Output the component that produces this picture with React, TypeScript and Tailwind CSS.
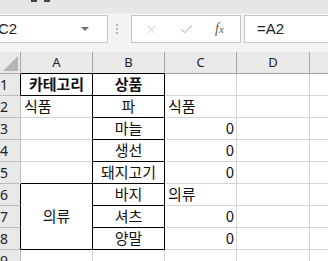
import React from 'react';
import { X, Check } from 'lucide-react';

const GRID = 'border-[#d4d4d4]';

type Cell = {
  text?: string;
  align?: 'left' | 'center' | 'right';
  bold?: boolean;
  r?: boolean; // black right border
  b?: boolean; // black bottom border
};

const rows: Cell[][] = [
  [{ text: '카테고리', align: 'center', bold: true, r: true, b: true }, { text: '상품', align: 'center', bold: true, r: true, b: true }, {}, {}],
  [{ text: '식품', align: 'left', r: true }, { text: '파', align: 'center', r: true, b: true }, { text: '식품', align: 'left' }, {}],
  [{ r: true }, { text: '마늘', align: 'center', r: true, b: true }, { text: '0', align: 'right' }, {}],
  [{ r: true }, { text: '생선', align: 'center', r: true, b: true }, { text: '0', align: 'right' }, {}],
  [{ r: true, b: true }, { text: '돼지고기', align: 'center', r: true, b: true }, { text: '0', align: 'right' }, {}],
  [{ text: '의류', align: 'center', r: true, b: true }, { text: '바지', align: 'center', r: true, b: true }, { text: '의류', align: 'left' }, {}],
  [{}, { text: '셔츠', align: 'center', r: true, b: true }, { text: '0', align: 'right' }, {}],
  [{}, { text: '양말', align: 'center', r: true, b: true }, { text: '0', align: 'right' }, {}],
];

const SheetCell = ({ cell, extra = '' }: { cell: Cell; extra?: string }) => {
  const justify =
    cell.align === 'center' ? 'justify-center' : cell.align === 'right' ? 'justify-end pr-[2px]' : 'justify-start pl-[3px]';
  return (
    <div
      className={`flex items-center border-r border-b ${GRID} ${cell.r ? 'border-r-black' : ''} ${
        cell.b ? 'border-b-black' : ''
      } ${justify} ${cell.bold ? 'font-bold' : ''} ${extra}`}
    >
      {cell.text}
    </div>
  );
};

const App: React.FC = () => {
  return (
    <div className="w-[328px] h-[261px] overflow-hidden bg-white text-[#111] font-['Noto_Sans_CJK_KR','Noto_Sans',sans-serif]">
      {/* ribbon edge */}
      <div className="relative h-[14px] bg-gradient-to-b from-[#e4e4e4] to-[#e9e9e9]">
        <div className="absolute left-[31px] top-0 w-[6px] h-[2px] bg-[#444]" />
        <div className="absolute left-[44px] top-0 w-[6px] h-[2px] bg-[#444]" />
      </div>

      {/* formula bar */}
      <div className="h-[38px] bg-[#f3f3f3] border-t border-[#fafafa] flex items-start">
        <div className="-ml-[2px] w-[110px] h-[28px] bg-white border border-[#c6c6c6] flex items-center justify-between pr-[18px]">
          <span className="text-[15px] -ml-[1px] font-['Liberation_Sans',sans-serif] text-[#222]">C2</span>
          <span className="w-0 h-0 border-l-[4px] border-r-[4px] border-t-[4px] border-l-transparent border-r-transparent border-t-[#6f6f6f]" />
        </div>
        <div className="w-[16px] h-[28px] flex flex-col items-center justify-center gap-[2px] ml-[1px]">
          <span className="w-[2px] h-[2px] bg-[#b4b4b4]" />
          <span className="w-[2px] h-[2px] bg-[#b4b4b4]" />
          <span className="w-[2px] h-[2px] bg-[#b4b4b4]" />
        </div>
        <div className="ml-[6px] w-[110px] h-[28px] bg-white border border-[#c6c6c6] flex items-center">
          <X className="ml-[13px] w-[13px] h-[13px] text-[#c2c2c2]" strokeWidth={1.5} />
          <Check className="ml-[21px] w-[15px] h-[15px] text-[#c6c6c6]" strokeWidth={1.8} />
          <span className="ml-[21px] italic font-['Liberation_Serif',serif] text-[14px] text-[#5a5a5a] leading-none">
            f<span className="text-[11px]">x</span>
          </span>
        </div>
        <div className="ml-[3px] flex-1 h-[28px] bg-white border border-[#c6c6c6] border-r-0 flex items-center pl-[12px]">
          <span className="text-[15px] font-['Liberation_Sans',sans-serif] text-[#222]">=A2</span>
        </div>
      </div>

      {/* sheet */}
      <div className="grid grid-cols-[21px_72px_72px_72px_73px_40px] auto-rows-[22px] text-[15px]">
        {/* column headers */}
        <div className="relative bg-[#e9e9e9] border-r border-b border-[#a6a6a6]">
          <svg className="absolute left-[3px] bottom-[2px]" width="15" height="15" viewBox="0 0 15 15">
            <polygon points="0,15 15,15 15,0" fill="#b5b5b5" />
          </svg>
        </div>
        {['A', 'B', 'C', 'D', ''].map((l, i) => (
          <div
            key={l + i}
            className={`flex items-center justify-center bg-[#e9e9e9] border-r border-b border-[#a6a6a6] text-[13px] font-['Noto_Sans',sans-serif] text-[#222] ${
              i < 2 ? 'border-b-black' : ''
            }`}
          >
            {l}
          </div>
        ))}

        {rows.map((row, ri) => (
          <React.Fragment key={ri}>
            <div
              className={`flex items-center bg-[#e9e9e9] border-r border-b border-[#bdbdbd] text-[14px] font-['Noto_Sans',sans-serif] text-[#222] ${
                ri === 0 || ri >= 5 ? 'border-r-black' : ''
              }`}
            >
              {ri + 1}
            </div>
            {row.map((cell, ci) => {
              if (ci === 0 && ri >= 6) return null;
              if (ci === 0 && ri === 5) return <SheetCell key={ci} cell={cell} extra="row-span-3" />;
              return <SheetCell key={ci} cell={cell} />;
            })}
            <div className={`border-r border-b ${GRID}`} />
          </React.Fragment>
        ))}

        {/* row 9 */}
        <div className="flex items-center bg-[#e9e9e9] border-r border-b border-[#bdbdbd] text-[14px] font-['Noto_Sans',sans-serif] text-[#222]">
          9
        </div>
        {[0, 1, 2, 3, 4].map((i) => (
          <div key={i} className={`border-r border-b ${GRID}`} />
        ))}
      </div>
    </div>
  );
};

export default App;
